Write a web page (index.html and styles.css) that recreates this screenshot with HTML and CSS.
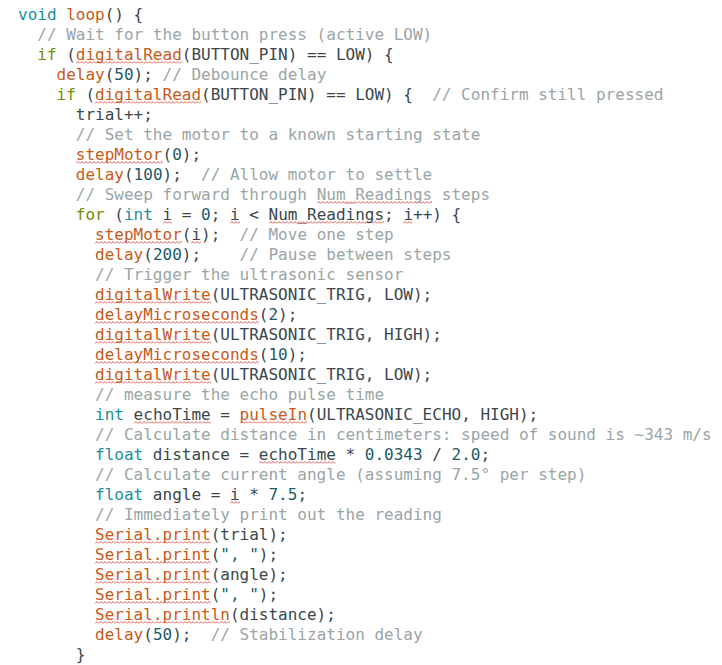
FILE: index.html
```html
<!DOCTYPE html>
<html>
<head>
<meta charset="utf-8">
<link rel="stylesheet" href="styles.css">
</head>
<body>
<pre class="code"><span class="k">void</span> <span class="f">loop</span>() {
  <span class="m">// Wait for the button press (active LOW)</span>
  <span class="c">if</span> (<span class="f s">digitalRead</span>(BUTTON_PIN) == LOW) {
    <span class="f">delay</span>(<span class="n">50</span>); <span class="m">// Debounce delay</span>
    <span class="c">if</span> (<span class="f s">digitalRead</span>(BUTTON_PIN) == LOW) {  <span class="m">// Confirm still pressed</span>
      trial++;
      <span class="m">// Set the motor to a known starting state</span>
      <span class="f s">stepMotor</span>(<span class="n">0</span>);
      <span class="f">delay</span>(<span class="n">100</span>);  <span class="m">// Allow motor to settle</span>
      <span class="m">// Sweep forward through <span class="s">Num_Readings</span> steps</span>
      <span class="c">for</span> (<span class="k">int</span> <span class="s">i</span> = <span class="n">0</span>; <span class="s">i</span> &lt; <span class="s">Num_Readings</span>; <span class="s">i</span>++) {
        <span class="f s">stepMotor</span>(<span class="s">i</span>);  <span class="m">// Move one step</span>
        <span class="f">delay</span>(<span class="n">200</span>);    <span class="m">// Pause between steps</span>
        <span class="m">// Trigger the ultrasonic sensor</span>
        <span class="f s">digitalWrite</span>(ULTRASONIC_TRIG, LOW);
        <span class="f s">delayMicroseconds</span>(<span class="n">2</span>);
        <span class="f s">digitalWrite</span>(ULTRASONIC_TRIG, HIGH);
        <span class="f s">delayMicroseconds</span>(<span class="n">10</span>);
        <span class="f s">digitalWrite</span>(ULTRASONIC_TRIG, LOW);
        <span class="m">// measure the echo pulse time</span>
        <span class="k">int</span> <span class="s">echoTime</span> = <span class="f s">pulseIn</span>(ULTRASONIC_ECHO, HIGH);
        <span class="m">// Calculate distance in centimeters: speed of sound is ~343 m/s</span>
        <span class="k">float</span> distance = <span class="s">echoTime</span> * <span class="n">0.0343</span> / <span class="n">2.0</span>;
        <span class="m">// Calculate current angle (assuming 7.5° per step)</span>
        <span class="k">float</span> angle = <span class="s">i</span> * <span class="n">7.5</span>;
        <span class="m">// Immediately print out the reading</span>
        <span class="f s">Serial.print</span>(trial);
        <span class="f s">Serial.print</span>(<span class="n">", "</span>);
        <span class="f s">Serial.print</span>(angle);
        <span class="f s">Serial.print</span>(<span class="n">", "</span>);
        <span class="f s">Serial.println</span>(distance);
        <span class="f">delay</span>(<span class="n">50</span>);  <span class="m">// Stabilization delay</span>
      }</pre>
</body>
</html>
```
FILE: styles.css
```css
html, body {
  margin: 0;
  padding: 0;
  background: #ffffff;
}
body {
  padding: 5px 0 0 18px;
}
.code {
  margin: 0;
  font-family: "DejaVu Sans Mono", monospace;
  font-size: 16px;
  line-height: 20px;
  color: #3b474c;
  white-space: pre;
}
.k { color: #1a8f9c; }
.f { color: #c85a1a; }
.c { color: #728e00; }
.m { color: #9aa5a6; }
.n { color: #1d5a66; }
.s {
  background-image: url("data:image/svg+xml,%3Csvg xmlns='http://www.w3.org/2000/svg' width='4' height='3'%3E%3Cpath d='M0 2.5 L2 0.5 L4 2.5' fill='none' stroke='%23e8584f' stroke-width='1'/%3E%3C/svg%3E");
  background-repeat: repeat-x;
  background-size: 4px 3px;
  background-position: 0 100%;
}
```
